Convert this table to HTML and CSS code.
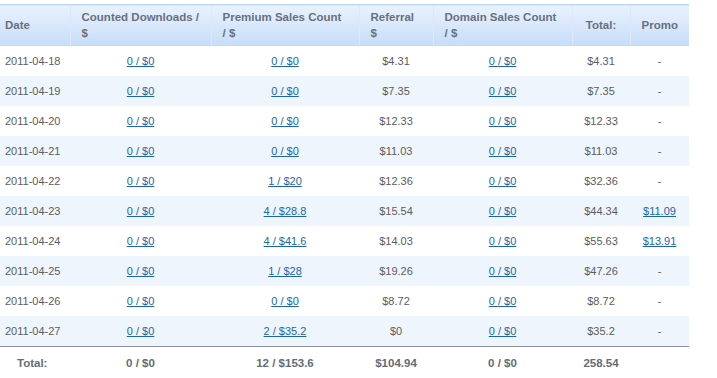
FILE: index.html
```html
<!DOCTYPE html>
<html>
<head>
<meta charset="utf-8">
<link rel="stylesheet" href="styles.css">
</head>
<body>
<table class="stats">
  <colgroup>
    <col class="c-date"><col class="c-dl"><col class="c-prem"><col class="c-ref"><col class="c-dom"><col class="c-tot"><col class="c-promo">
  </colgroup>
  <thead>
    <tr>
      <th class="first">Date</th>
      <th>Counted Downloads /<br>$</th>
      <th>Premium Sales Count<br>/ $</th>
      <th>Referral<br>$</th>
      <th>Domain Sales Count<br>/ $</th>
      <th class="ctr">Total:</th>
      <th class="ctr">Promo</th>
    </tr>
  </thead>
  <tbody>
    <tr><td class="date">2011-04-18</td><td><a href="#">0 / $0</a></td><td><a href="#">0 / $0</a></td><td>$4.31</td><td><a href="#">0 / $0</a></td><td>$4.31</td><td>-</td></tr>
    <tr><td class="date">2011-04-19</td><td><a href="#">0 / $0</a></td><td><a href="#">0 / $0</a></td><td>$7.35</td><td><a href="#">0 / $0</a></td><td>$7.35</td><td>-</td></tr>
    <tr><td class="date">2011-04-20</td><td><a href="#">0 / $0</a></td><td><a href="#">0 / $0</a></td><td>$12.33</td><td><a href="#">0 / $0</a></td><td>$12.33</td><td>-</td></tr>
    <tr><td class="date">2011-04-21</td><td><a href="#">0 / $0</a></td><td><a href="#">0 / $0</a></td><td>$11.03</td><td><a href="#">0 / $0</a></td><td>$11.03</td><td>-</td></tr>
    <tr><td class="date">2011-04-22</td><td><a href="#">0 / $0</a></td><td><a href="#">1 / $20</a></td><td>$12.36</td><td><a href="#">0 / $0</a></td><td>$32.36</td><td>-</td></tr>
    <tr><td class="date">2011-04-23</td><td><a href="#">0 / $0</a></td><td><a href="#">4 / $28.8</a></td><td>$15.54</td><td><a href="#">0 / $0</a></td><td>$44.34</td><td><a href="#">$11.09</a></td></tr>
    <tr><td class="date">2011-04-24</td><td><a href="#">0 / $0</a></td><td><a href="#">4 / $41.6</a></td><td>$14.03</td><td><a href="#">0 / $0</a></td><td>$55.63</td><td><a href="#">$13.91</a></td></tr>
    <tr><td class="date">2011-04-25</td><td><a href="#">0 / $0</a></td><td><a href="#">1 / $28</a></td><td>$19.26</td><td><a href="#">0 / $0</a></td><td>$47.26</td><td>-</td></tr>
    <tr><td class="date">2011-04-26</td><td><a href="#">0 / $0</a></td><td><a href="#">0 / $0</a></td><td>$8.72</td><td><a href="#">0 / $0</a></td><td>$8.72</td><td>-</td></tr>
    <tr><td class="date">2011-04-27</td><td><a href="#">0 / $0</a></td><td><a href="#">2 / $35.2</a></td><td>$0</td><td><a href="#">0 / $0</a></td><td>$35.2</td><td>-</td></tr>
  </tbody>
  <tfoot>
    <tr><td>Total:</td><td>0 / $0</td><td>12 / $153.6</td><td>$104.94</td><td>0 / $0</td><td>258.54</td><td></td></tr>
  </tfoot>
</table>
</body>
</html>
```
FILE: styles.css
```css
html, body {
  margin: 0;
  padding: 0;
  background: #fff;
}
body {
  font-family: "Liberation Sans", Arial, sans-serif;
  font-size: 11px;
  color: #5c5c5c;
}
.stats {
  margin-top: 4px;
  width: 689px;
  border-collapse: collapse;
  table-layout: fixed;
}
.c-date { width: 70px; }
.c-dl { width: 141px; }
.c-prem { width: 148px; }
.c-ref { width: 74px; }
.c-dom { width: 139px; }
.c-tot { width: 58px; }
.c-promo { width: 59px; }

.stats thead th {
  height: 40px;
  padding: 0 4px 0 11px;
  text-align: left;
  vertical-align: middle;
  font-weight: bold;
  font-size: 11.5px;
  line-height: 16px;
  color: #6a707c;
  background: linear-gradient(#e9f2fd, #c7ddf8);
  border-top: 1px solid #bcd7f5;
  border-bottom: 1px solid #c4dbf6;
  border-left: 1px solid #dde9fa;
}
.stats thead th.first {
  padding-left: 5px;
  border-left: none;
}
.stats thead th.ctr {
  text-align: center;
  padding: 0;
}
.stats tbody td {
  height: 30px;
  padding: 0;
  text-align: center;
  vertical-align: middle;
}
.stats tbody td.date {
  text-align: left;
  padding-left: 5px;
}
.stats tbody tr:nth-child(even) td {
  background: #eef5fd;
}
.stats a {
  color: #1c66a8;
  text-decoration: underline;
}
.stats tfoot td {
  height: 31px;
  padding: 0;
  text-align: center;
  vertical-align: middle;
  font-weight: bold;
  font-size: 11.5px;
  color: #666b76;
  border-top: 1px solid #8c9199;
}
.stats tfoot td:first-child {
  text-align: left;
  padding-left: 17px;
}
```
